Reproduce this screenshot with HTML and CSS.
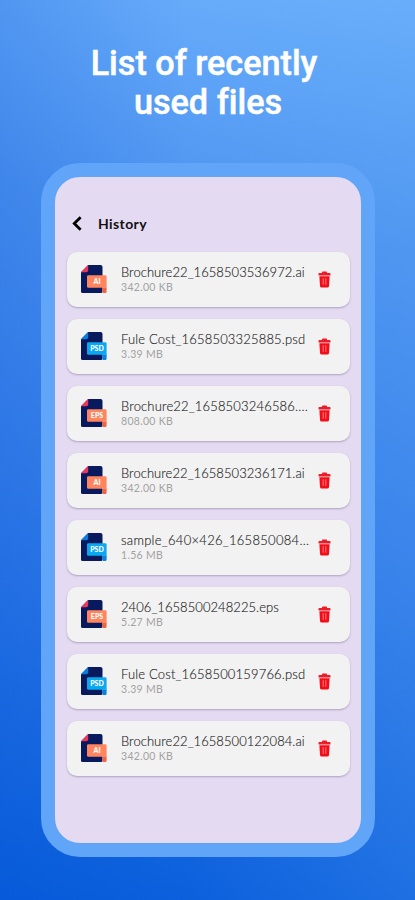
FILE: index.html
```html
<!DOCTYPE html>
<html lang="en">
<head>
<meta charset="utf-8">
<title>History</title>
<link rel="stylesheet" href="styles.css">
</head>
<body>
<svg class="defs" width="0" height="0" aria-hidden="true">
  <symbol id="doc" viewBox="0 0 26 28">
    <path d="M7.2 0H19.5Q21.5 0 21.5 2V26.5Q21.5 28 20 28H1.5Q0 28 0 26.5V7.2Z" fill="#08195d"/>
    <path d="M0 7.2L7.2 0V5.2Q7.2 7.2 5.2 7.2Z" fill="var(--fold)"/>
    <path d="M21.3 22.5H25.6V26.5Q25.6 28.2 23.5 28.2Q21.3 28.2 21.3 26.5Z" fill="var(--edge)"/>
    <path d="M7.3 10.2H24.2Q25.6 10.2 25.6 11.6V24Q25.6 22.7 24 22.7H7.3Q6 22.7 6 21.4V11.5Q6 10.2 7.3 10.2Z" fill="var(--tag)"/>
  </symbol>
  <symbol id="trash" viewBox="0 0 13 17">
    <path d="M4 2V1.2Q4 .5 4.8.5H8.2Q9 .5 9 1.2V2H11.7Q12.5 2 12.5 2.8V4.4H.5V2.8Q.5 2 1.3 2Z" fill="#ee1c28"/>
    <path d="M1.4 5.2H11.6L11 15Q10.9 16.5 9.4 16.5H3.6Q2.1 16.5 2 15Z" fill="#f30d19"/>
    <path d="M5.2 7.2V13.8M7.8 7.2V13.8" stroke="#ff8a8d" stroke-width=".9"/>
  </symbol>
</svg>
<h1 class="headline"><span class="line">List of recently</span> <span class="line second">used files</span></h1>
<main class="phone">
  <header class="bar">
    <svg class="back" viewBox="0 0 10 15"><path d="M8.6 1.3L2.3 7.5L8.6 13.7" fill="none" stroke="#000" stroke-width="2.8"/></svg>
    <h2 class="title">History</h2>
  </header>
  <ul class="list">
    <li class="card"><span class="file ai"><svg><use href="#doc"/></svg><b>AI</b></span><div class="info"><p class="name tight">Brochure22_1658503536972.ai</p><p class="size">342.00 KB</p></div><svg class="trash"><use href="#trash"/></svg></li>
    <li class="card"><span class="file psd"><svg><use href="#doc"/></svg><b>PSD</b></span><div class="info"><p class="name">Fule Cost_1658503325885.psd</p><p class="size">3.39 MB</p></div><svg class="trash"><use href="#trash"/></svg></li>
    <li class="card"><span class="file eps"><svg><use href="#doc"/></svg><b>EPS</b></span><div class="info"><p class="name">Brochure22_1658503246586....</p><p class="size">808.00 KB</p></div><svg class="trash"><use href="#trash"/></svg></li>
    <li class="card"><span class="file ai"><svg><use href="#doc"/></svg><b>AI</b></span><div class="info"><p class="name tight">Brochure22_1658503236171.ai</p><p class="size">342.00 KB</p></div><svg class="trash"><use href="#trash"/></svg></li>
    <li class="card"><span class="file psd"><svg><use href="#doc"/></svg><b>PSD</b></span><div class="info"><p class="name wide">sample_640×426_165850084...</p><p class="size">1.56 MB</p></div><svg class="trash"><use href="#trash"/></svg></li>
    <li class="card"><span class="file eps"><svg><use href="#doc"/></svg><b>EPS</b></span><div class="info"><p class="name tight">2406_1658500248225.eps</p><p class="size">5.27 MB</p></div><svg class="trash"><use href="#trash"/></svg></li>
    <li class="card"><span class="file psd"><svg><use href="#doc"/></svg><b>PSD</b></span><div class="info"><p class="name">Fule Cost_1658500159766.psd</p><p class="size">3.39 MB</p></div><svg class="trash"><use href="#trash"/></svg></li>
    <li class="card"><span class="file ai"><svg><use href="#doc"/></svg><b>AI</b></span><div class="info"><p class="name tight">Brochure22_1658500122084.ai</p><p class="size">342.00 KB</p></div><svg class="trash"><use href="#trash"/></svg></li>
  </ul>
</main>
</body>
</html>
```

FILE: styles.css
```css
* { box-sizing: border-box; margin: 0; padding: 0; }
body {
  width: 415px;
  height: 900px;
  overflow: hidden;
  padding-top: 44px;
  background:
    linear-gradient(90deg, rgba(0, 75, 210, .18) 0%, rgba(60, 140, 240, 0) 45%, rgba(90, 165, 245, .2) 100%),
    linear-gradient(190deg, #6bb0fc 0%, #4d93f0 26%, #2f7ae8 62%, #085ddb 100%);
  font-family: Lato, "Liberation Sans", sans-serif;
}
.defs { display: none; }
.headline {
  height: 118.5px;
  padding-right: 7px;
  text-align: center;
  color: #fff;
  font: 500 34.2px/39px Roboto, sans-serif;
  font-variant-ligatures: none;
  -webkit-text-stroke: .5px #fff;
}
.line { display: block; }
.second { padding-left: 8px; }
.phone {
  width: 334px;
  height: 694px;
  margin-left: 41px;
  padding: 38px 12.5px 0;
  border: 14px solid #60a5f8;
  border-radius: 39px;
  background: #e4daf1;
}
.bar { display: flex; align-items: center; height: 17px; padding-left: 4px; }
.back { width: 10px; height: 15px; }
.title { margin-left: 16.5px; font-size: 14px; line-height: 17px; font-weight: 700; letter-spacing: .4px; color: #111; }
.list { list-style: none; display: grid; gap: 12px; margin: 20px 0 0 -1px; width: 283px; }
.card {
  display: flex;
  align-items: center;
  height: 55px;
  padding: 0 19px 0 14px;
  border-radius: 10px;
  background: #f2f2f2;
  box-shadow: 0 1px 2px rgba(75, 60, 110, .35);
}
.file { display: grid; width: 26px; height: 28px; }
.file svg, .file b { grid-area: 1 / 1; }
.file svg { width: 26px; height: 28px; overflow: visible; }
.file b {
  align-self: start;
  margin: 12px 0 0 7px;
  text-align: center;
  color: #fff;
  font-size: 7px;
  line-height: 9px;
  font-weight: 900;
}
.ai, .eps { --fold: #ed365d; --tag: #ff855f; --edge: #ee653f; }
.psd { --fold: #087de0; --tag: #0aa8ef; --edge: #0682df; }
.info { flex: 1; padding-left: 14.5px; min-width: 0; }
.name { white-space: nowrap; font-size: 13px; line-height: 17px; font-weight: 300; letter-spacing: .17px; color: #222; -webkit-text-stroke: .15px #333; }
.tight { letter-spacing: .06px; }
.wide { letter-spacing: .29px; }
.size { font-size: 10.5px; line-height: 13px; letter-spacing: .3px; color: #a2a2a2; }
.trash { width: 13px; height: 17px; flex: none; }
```
